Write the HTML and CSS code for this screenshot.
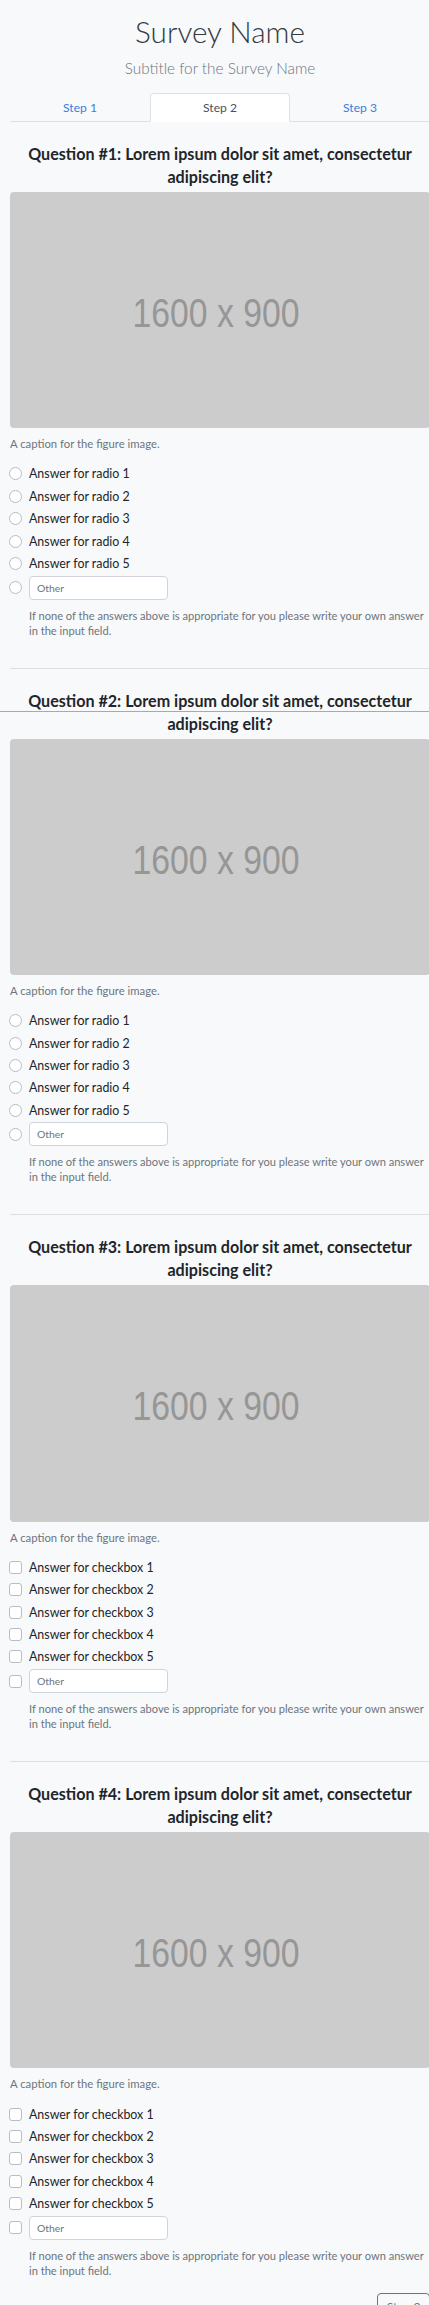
FILE: index.html
```html
<!DOCTYPE html>
<html lang="en">
<head>
<meta charset="utf-8">
<title>Survey Name</title>
<link rel="stylesheet" href="styles.css">
</head>
<body>
<div class="overlay-line"></div>
<main class="container">
  <header class="survey-header">
    <h1 class="survey-title">Survey Name</h1>
    <p class="survey-subtitle">Subtitle for the Survey Name</p>
  </header>
  <nav class="steps">
    <a class="step" href="#">Step 1</a>
    <a class="step active" href="#">Step 2</a>
    <a class="step" href="#">Step 3</a>
  </nav>

  <section class="question">
    <h2 class="question-title">Question #1: Lorem ipsum dolor sit amet, consectetur adipiscing elit?</h2>
    <figure class="figure">
      <div class="placeholder"><svg viewBox="0 0 420 236.25" preserveAspectRatio="none"><text x="206" y="135" text-anchor="middle" textLength="167" lengthAdjust="spacingAndGlyphs">1600 x 900</text></svg></div>
      <figcaption class="caption">A caption for the figure image.</figcaption>
    </figure>
    <div class="options">
      <label class="option"><span class="radio"></span>Answer for radio 1</label>
      <label class="option"><span class="radio"></span>Answer for radio 2</label>
      <label class="option"><span class="radio"></span>Answer for radio 3</label>
      <label class="option"><span class="radio"></span>Answer for radio 4</label>
      <label class="option"><span class="radio"></span>Answer for radio 5</label>
      <div class="option option-other"><span class="radio"></span><input class="other-input" type="text" placeholder="Other"></div>
      <p class="help">If none of the answers above is appropriate for you please write your own answer in the input field.</p>
    </div>
  </section>
  <hr class="divider">

  <section class="question">
    <h2 class="question-title">Question #2: Lorem ipsum dolor sit amet, consectetur adipiscing elit?</h2>
    <figure class="figure">
      <div class="placeholder"><svg viewBox="0 0 420 236.25" preserveAspectRatio="none"><text x="206" y="135" text-anchor="middle" textLength="167" lengthAdjust="spacingAndGlyphs">1600 x 900</text></svg></div>
      <figcaption class="caption">A caption for the figure image.</figcaption>
    </figure>
    <div class="options">
      <label class="option"><span class="radio"></span>Answer for radio 1</label>
      <label class="option"><span class="radio"></span>Answer for radio 2</label>
      <label class="option"><span class="radio"></span>Answer for radio 3</label>
      <label class="option"><span class="radio"></span>Answer for radio 4</label>
      <label class="option"><span class="radio"></span>Answer for radio 5</label>
      <div class="option option-other"><span class="radio"></span><input class="other-input" type="text" placeholder="Other"></div>
      <p class="help">If none of the answers above is appropriate for you please write your own answer in the input field.</p>
    </div>
  </section>
  <hr class="divider">

  <section class="question">
    <h2 class="question-title">Question #3: Lorem ipsum dolor sit amet, consectetur adipiscing elit?</h2>
    <figure class="figure">
      <div class="placeholder"><svg viewBox="0 0 420 236.25" preserveAspectRatio="none"><text x="206" y="135" text-anchor="middle" textLength="167" lengthAdjust="spacingAndGlyphs">1600 x 900</text></svg></div>
      <figcaption class="caption">A caption for the figure image.</figcaption>
    </figure>
    <div class="options">
      <label class="option"><span class="check"></span>Answer for checkbox 1</label>
      <label class="option"><span class="check"></span>Answer for checkbox 2</label>
      <label class="option"><span class="check"></span>Answer for checkbox 3</label>
      <label class="option"><span class="check"></span>Answer for checkbox 4</label>
      <label class="option"><span class="check"></span>Answer for checkbox 5</label>
      <div class="option option-other"><span class="check"></span><input class="other-input" type="text" placeholder="Other"></div>
      <p class="help">If none of the answers above is appropriate for you please write your own answer in the input field.</p>
    </div>
  </section>
  <hr class="divider">

  <section class="question">
    <h2 class="question-title">Question #4: Lorem ipsum dolor sit amet, consectetur adipiscing elit?</h2>
    <figure class="figure">
      <div class="placeholder"><svg viewBox="0 0 420 236.25" preserveAspectRatio="none"><text x="206" y="135" text-anchor="middle" textLength="167" lengthAdjust="spacingAndGlyphs">1600 x 900</text></svg></div>
      <figcaption class="caption">A caption for the figure image.</figcaption>
    </figure>
    <div class="options">
      <label class="option"><span class="check"></span>Answer for checkbox 1</label>
      <label class="option"><span class="check"></span>Answer for checkbox 2</label>
      <label class="option"><span class="check"></span>Answer for checkbox 3</label>
      <label class="option"><span class="check"></span>Answer for checkbox 4</label>
      <label class="option"><span class="check"></span>Answer for checkbox 5</label>
      <div class="option option-other"><span class="check"></span><input class="other-input" type="text" placeholder="Other"></div>
      <p class="help">If none of the answers above is appropriate for you please write your own answer in the input field.</p>
    </div>
  </section>

  <div class="actions"><button class="btn-next" type="button">Step 3</button></div>
</main>
</body>
</html>
```

FILE: styles.css
```css
html { overflow: hidden; }
body {
  margin: 0;
  background: #f8f9fa;
  color: #212529;
  font-family: "Lato", "Open Sans", sans-serif;
}
.container { width: 420px; margin-left: 10px; }
.survey-header { text-align: center; }
.survey-title {
  margin: 14px 0 0;
  font-size: 29.7px;
  font-weight: 300;
  line-height: 36px;
  color: #343a40;
}
.survey-subtitle {
  margin: 8px 0 0;
  font-size: 15.3px;
  font-weight: 300;
  line-height: 20px;
  color: #6c757d;
}
.steps {
  display: grid;
  grid-template-columns: repeat(3, 1fr);
  margin-top: 15px;
  border-bottom: 1px solid #dee2e6;
}
.step {
  display: block;
  height: 29px;
  box-sizing: border-box;
  line-height: 27px;
  border: 1px solid transparent;
  border-radius: 4px 4px 0 0;
  margin-bottom: -1px;
  text-align: center;
  font-size: 12.1px;
  color: #3b7ddd;
  text-decoration: none;
}
.step.active {
  background: #fff;
  border-color: #dee2e6 #dee2e6 #fff;
  color: #495057;
}
.question { padding-top: 20px; }
.question-title {
  margin: 0 0 4px;
  font-size: 16.1px;
  font-weight: 700;
  line-height: 23px;
  text-align: center;
  color: #212529;
}
.figure { margin: 0; }
.placeholder {
  aspect-ratio: 16 / 9;
  background: #ccc;
  border-radius: 4px;
  overflow: hidden;
}
.placeholder svg { display: block; width: 100%; height: 100%; }
.placeholder text {
  font-family: "Liberation Sans", Arial, sans-serif;
  font-size: 41px;
  fill: #969696;
}
.caption {
  margin-top: 8px;
  font-size: 11.3px;
  line-height: 16px;
  color: #6c757d;
}
.options { margin-top: 10.5px; }
.option {
  display: flex;
  align-items: center;
  height: 22.4px;
  font-size: 12.4px;
}
.radio, .check {
  flex: none;
  width: 13px;
  height: 13px;
  box-sizing: border-box;
  border: 1px solid #b8bdc2;
  background: #fff;
  margin: 0 7px 0 -1px;
}
.radio { border-radius: 50%; }
.check { border-radius: 3px; }
.option-other { height: 24px; margin-top: 1px; }
.other-input {
  width: 139px;
  height: 24px;
  box-sizing: border-box;
  border: 1px solid #ced4da;
  border-radius: 4px;
  padding: 0 7px;
  font-family: inherit;
  font-size: 10.4px;
  background: #fff;
  color: #495057;
}
.other-input::placeholder { color: #6c757d; }
.help {
  margin: 8px 0 0;
  padding-left: 19px;
  font-size: 11.1px;
  line-height: 15px;
  color: #6c757d;
}
.divider {
  margin: 30px 0 0;
  height: 0;
  border: 0;
  border-top: 1px solid #dcdee0;
}
.actions { margin-top: 15px; display: flex; justify-content: flex-end; }
.btn-next {
  height: 28px;
  padding: 0 8.5px;
  border: 1px solid #6c757d;
  border-radius: 4px;
  background: transparent;
  color: #6c757d;
  font-family: inherit;
  font-size: 12.1px;
}
.overlay-line {
  position: absolute;
  top: 711px;
  left: 0;
  width: 100%;
  height: 1px;
  background: #a9a9a9;
  z-index: 5;
}
```
